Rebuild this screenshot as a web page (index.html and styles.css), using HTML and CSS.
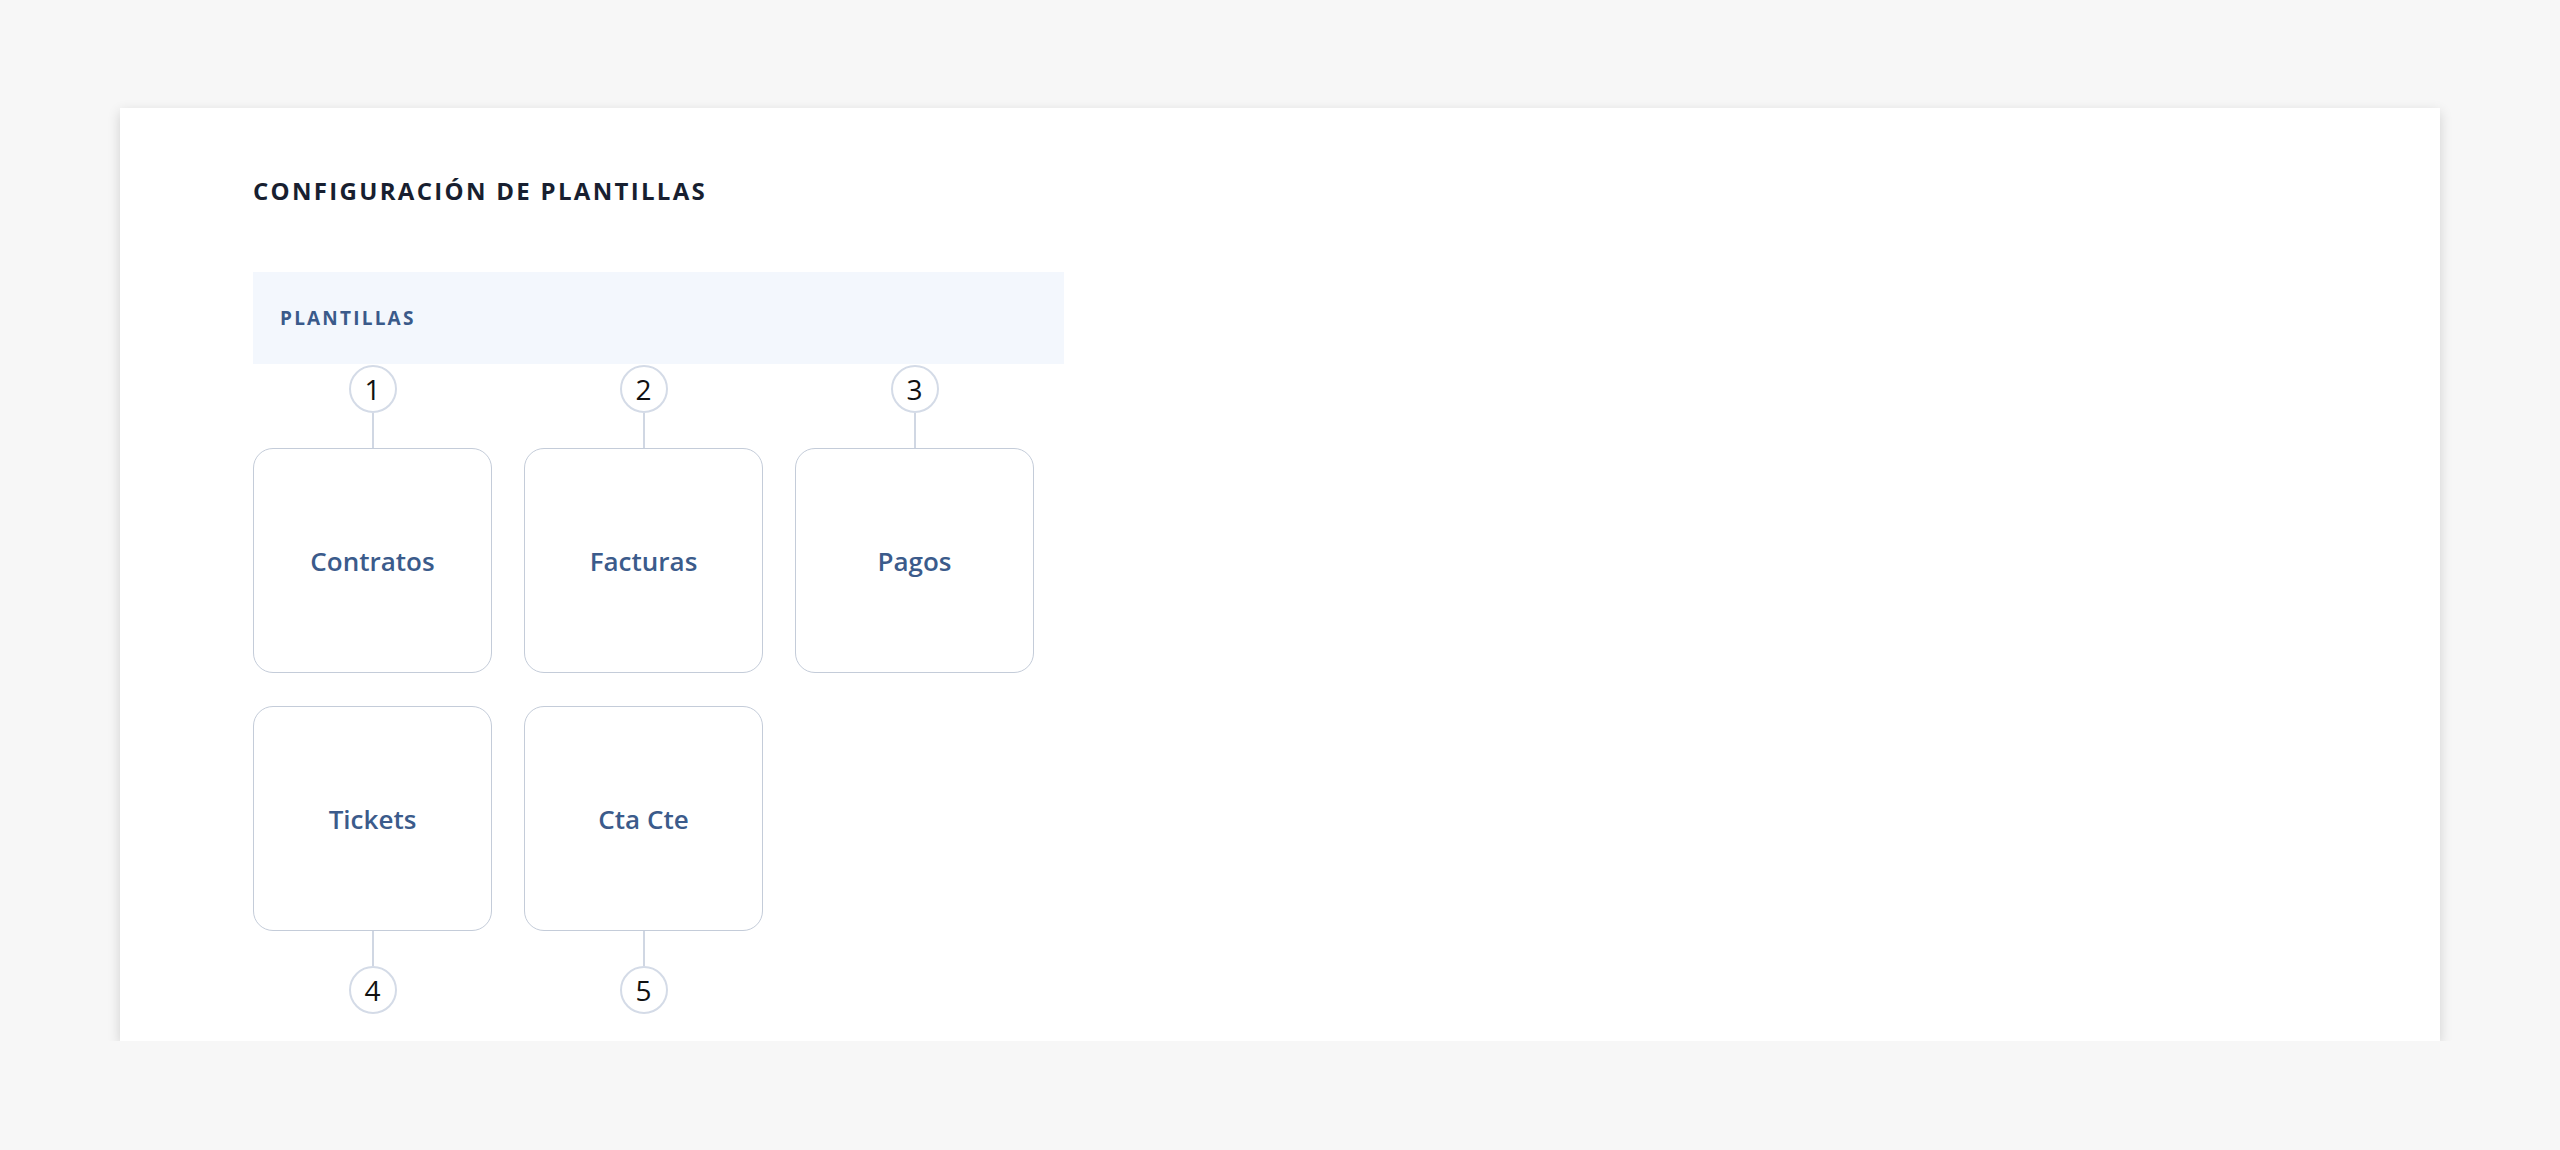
FILE: index.html
```html
<!DOCTYPE html>
<html lang="es">
<head>
<meta charset="UTF-8">
<meta name="viewport" content="width=device-width, initial-scale=1.0">
<title>Configuración de plantillas</title>
<link rel="stylesheet" href="styles.css">
</head>
<body>

<div class="panel">
  <h1 class="panel-title">Configuración de plantillas</h1>

  <div class="section-head">Plantillas</div>

  <div class="templates">
    <!-- first row: step badge above each tile -->
    <div class="tile">
      <span class="step">1</span>
      <span class="link"></span>
      <a class="box" href="#">Contratos</a>
    </div>
    <div class="tile">
      <span class="step">2</span>
      <span class="link"></span>
      <a class="box" href="#">Facturas</a>
    </div>
    <div class="tile">
      <span class="step">3</span>
      <span class="link"></span>
      <a class="box" href="#">Pagos</a>
    </div>

    <!-- second row: step badge below -->
    <div class="tile below">
      <span class="step">4</span>
      <span class="link"></span>
      <a class="box" href="#">Tickets</a>
    </div>
    <div class="tile below">
      <span class="step">5</span>
      <span class="link"></span>
      <a class="box" href="#">Cta Cte</a>
    </div>
  </div>
</div>

</body>
</html>
```

FILE: styles.css
```css
body {
  margin: 0;
  background: #f7f7f7;
  font-family: "Open Sans", Arial, sans-serif;
}
.panel {
  margin: 108px 120px 0;
  padding: 67px 133px 27px;
  background: #fff;
  box-shadow: 0 4px 12px rgba(0, 0, 0, 0.16);
}
.panel-title {
  margin: 0;
  font-size: 24px;
  line-height: 32px;
  font-weight: 700;
  letter-spacing: 2.3px;
  text-transform: uppercase;
  color: #181f30;
}
.section-head {
  width: 811px;
  height: 92px;
  box-sizing: border-box;
  margin-top: 65px;
  padding-left: 27px;
  display: flex;
  align-items: center;
  background: #f3f7fd;
  font-size: 19px;
  font-weight: 700;
  letter-spacing: 2.2px;
  text-transform: uppercase;
  color: #3a5a8a;
}
.templates {
  display: grid;
  grid-template-columns: repeat(3, 239px);
  column-gap: 32px;
  row-gap: 33px;
  margin-top: 1px;
}
.tile {
  display: flex;
  flex-direction: column;
  align-items: center;
}
.tile.below {
  flex-direction: column-reverse;
}
.step {
  width: 48px;
  height: 48px;
  box-sizing: border-box;
  border: 2px solid #d4dbe7;
  border-radius: 50%;
  display: flex;
  align-items: center;
  justify-content: center;
  font-size: 28px;
  color: #111;
  background: #fff;
}
.link {
  width: 2px;
  height: 35px;
  background: #d0d7e3;
}
.box {
  width: 100%;
  height: 225px;
  box-sizing: border-box;
  border: 1px solid #c4ccd9;
  border-radius: 20px;
  display: flex;
  align-items: center;
  justify-content: center;
  font-size: 26px;
  font-weight: 600;
  color: #3b5b8b;
  text-decoration: none;
}
```
